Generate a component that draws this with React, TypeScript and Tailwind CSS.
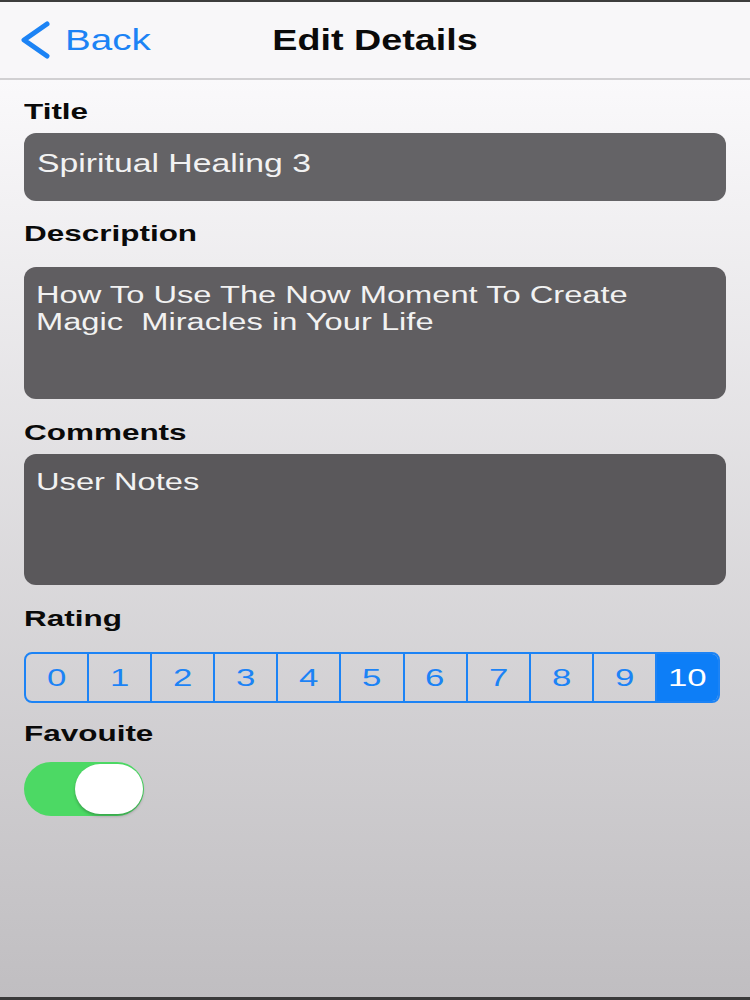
import React from 'react';

const ratings = [0, 1, 2, 3, 4, 5, 6, 7, 8, 9, 10];

const Label: React.FC<{ text: string; className?: string }> = ({ text, className = '' }) => (
  <div className={`h-[26px] text-[22px] leading-[26px] font-bold text-[#0a0a0a] ${className}`}>
    <span className="inline-block origin-left scale-x-[1.43]">{text}</span>
  </div>
);

const App: React.FC = () => {
  const selected = 10;

  return (
    <div className="h-[1000px] flex flex-col font-['Liberation_Sans',Arial,sans-serif]">
      <div className="h-[2px] bg-[#3d3d3d]" />

      {/* Nav bar */}
      <div className="h-[78px] bg-[#f8f7f9] border-b-2 border-[#d1d0d2] grid grid-cols-[1fr_auto_1fr] items-center">
        <div className="flex items-center pl-[19px]">
          <svg width="32" height="38" viewBox="0 0 32 38" className="text-[#1c83f5]">
            <polyline
              points="28,3 5,19 28,35"
              fill="none"
              stroke="currentColor"
              strokeWidth="5"
              strokeLinecap="round"
              strokeLinejoin="round"
            />
          </svg>
          <span className="ml-[14px] text-[29px] leading-[34px] text-[#1c83f5] inline-block origin-left scale-x-[1.33]">
            Back
          </span>
        </div>
        <div className="text-[29px] leading-[34px] font-bold text-[#0a0a0a]">
          <span className="inline-block origin-center scale-x-[1.3]">Edit Details</span>
        </div>
        <div />
      </div>

      {/* Form */}
      <div className="flex-1 px-[24px] bg-gradient-to-b from-[#faf9fb] to-[#c0bec1]">
        <Label text="Title" className="mt-[19px]" />
        <div className="mt-[8px] h-[68px] rounded-[12px] bg-[#646366] px-[13px] pt-[15px]">
          <span className="inline-block origin-left scale-x-[1.35] text-[25px] leading-[30px] text-[#f2f2f2]">
            Spiritual Healing 3
          </span>
        </div>

        <Label text="Description" className="mt-[20px]" />
        <div className="mt-[20px] h-[132px] rounded-[12px] bg-[#605e61] px-[12px] pt-[15px]">
          <span className="inline-block origin-left scale-x-[1.42] text-[23px] leading-[27px] text-[#f2f2f2] whitespace-pre">
            {'How To Use The Now Moment To Create\nMagic  Miracles in Your Life'}
          </span>
        </div>

        <Label text="Comments" className="mt-[21px]" />
        <div className="mt-[8px] h-[131px] rounded-[12px] bg-[#5a585b] px-[12px] pt-[15px]">
          <span className="inline-block origin-left scale-x-[1.42] text-[23px] leading-[27px] text-[#f2f2f2]">
            User Notes
          </span>
        </div>

        <Label text="Rating" className="mt-[21px]" />
        <div className="mt-[20px] w-[696px] h-[51px] flex rounded-[8px] border-2 border-[#1c83f5] overflow-hidden">
          {ratings.map((r, i) => (
            <div
              key={r}
              className={`flex-1 flex items-center justify-center ${i > 0 ? 'border-l-2 border-[#1c83f5]' : ''} ${
                r === selected ? 'bg-[#0d7ef7] text-white' : 'text-[#1c83f5]'
              }`}
            >
              <span className="inline-block origin-center scale-x-[1.45] text-[24px] leading-[27px]">{r}</span>
            </div>
          ))}
        </div>

        <Label text="Favouite" className="mt-[18px]" />
        <div className="mt-[15px] w-[120px] h-[54px] rounded-full bg-[#4cd964] flex items-center justify-end pr-[1px]">
          <div className="w-[68px] h-[50px] rounded-full bg-white shadow-[0_2px_3px_rgba(0,0,0,0.25)]" />
        </div>
      </div>

      <div className="h-[3px] bg-[#3a3a3a]" />
    </div>
  );
};

export default App;
